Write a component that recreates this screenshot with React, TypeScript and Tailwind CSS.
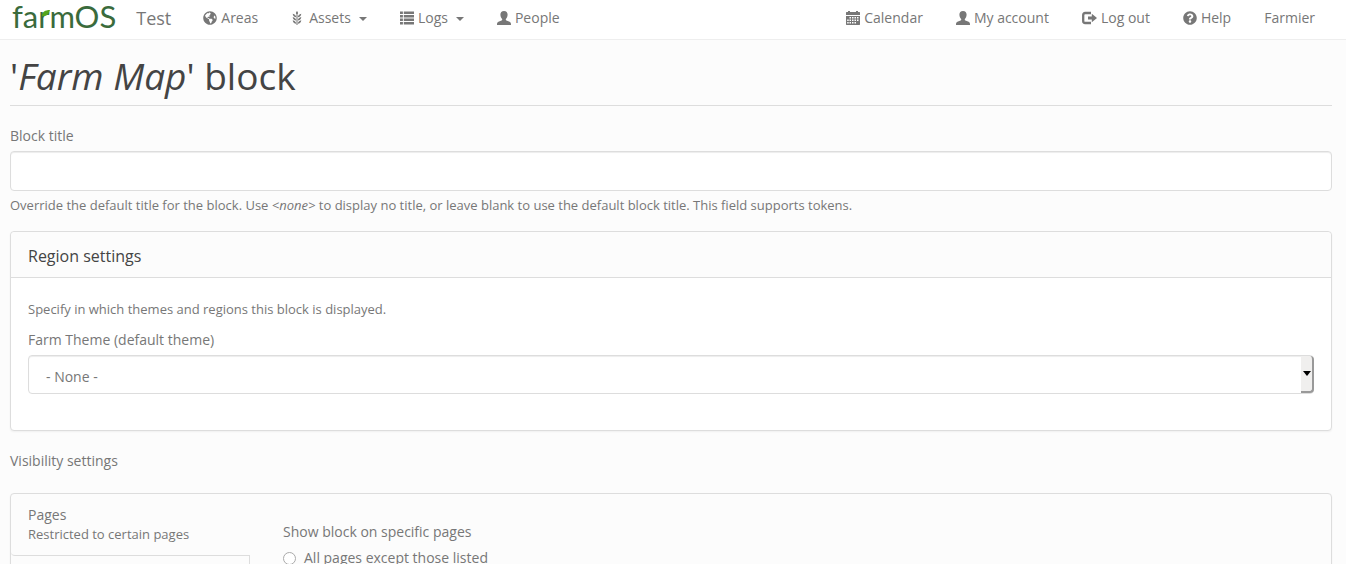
import type { ReactNode } from "react"
import { FaGlobeAmericas, FaQuestionCircle } from "react-icons/fa"

const UserIcon = () => (
    <svg viewBox="0 0 14 14" className="h-[14px] w-[14px] fill-current" aria-hidden="true">
        <path d="M7 0C4.600 0 3.400 1.500 3.400 3.600C3.400 5.300 4 7 5.100 8C5.400 8.700 5.200 9.300 4.600 9.600L1.400 10.800C0.400 11.300 0 12.200 0 13.400V14H14V13.400C14 12.200 13.600 11.300 12.600 10.800L9.400 9.600C8.800 9.300 8.600 8.700 8.900 8C10 7 10.600 5.300 10.600 3.600C10.600 1.500 9.400 0 7 0Z"/>
    </svg>
)

const ListIcon = () => (
    <svg viewBox="0 0 14 14" className="h-[14px] w-[14px] fill-current" aria-hidden="true">
        <path d="M0 .4h2.900v2.700H0zM3.800 .4H14v2.700H3.800zM0 3.900h2.900v2.700H0zM3.800 3.900H14v2.700H3.800zM0 7.400h2.900v2.700H0zM3.800 7.400H14v2.700H3.800zM0 10.900h2.900v2.700H0zM3.800 10.900H14v2.700H3.800z"/>
    </svg>
)

const GrainIcon = () => (
    <svg viewBox="0 0 14 14" className="h-[14px] w-[14px] fill-current" aria-hidden="true">
        <path d="M6 0C7.300 1.300 7.500 2.600 6 4.200C4.500 2.600 4.700 1.300 6 0ZM5.500 4H6.500V14H5.500Z"/>
        <path d="M1.700 2.800C3.700 3.200 5 4.300 5.300 6.300C3.200 6 1.900 5 1.700 2.800ZM10.300 2.800C8.300 3.200 7 4.300 6.700 6.300C8.800 6 10.100 5 10.300 2.800Z"/>
        <path d="M1.700 6C3.700 6.400 5 7.500 5.300 9.500C3.200 9.200 1.900 8.200 1.700 6ZM10.300 6C8.300 6.400 7 7.500 6.700 9.500C8.800 9.200 10.100 8.200 10.300 6Z"/>
        <path d="M1.700 9.200C3.700 9.600 5 10.700 5.300 12.700C3.200 12.400 1.900 11.400 1.700 9.200ZM10.300 9.200C8.300 9.600 7 10.700 6.700 12.700C8.800 12.400 10.100 11.400 10.300 9.200Z"/>
    </svg>
)

const CalendarIcon = () => (
    <svg viewBox="0 0 14 14" className="h-[14px] w-[14px] fill-current" aria-hidden="true">
        <path d="M2 0h2v1h6V0h2v1h1.500l.5.500V4H0V1.500L.5 1H2z"/>
        <path fillRule="evenodd" d="M0 5h14v8.500l-.5.500H.5l-.5-.5zM3.500 6v1.500h1.500V6zM6 6v1.500h1.500V6zM8.500 6v1.500H10V6zM11 6v1.500h1.500V6zM1.200 8.500V10h1.500V8.500zM3.500 8.500V10H5V8.500zM6 8.500V10h1.500V8.500zM8.500 8.500V10H10V8.500zM11 8.500V10h1.500V8.500zM1.200 11v1.500h1.500V11zM3.500 11v1.500H5V11zM6 11v1.500h1.500V11zM8.500 11v1.500H10V11z"/>
    </svg>
)

const LogOutIcon = () => (
    <svg viewBox="0 0 15 14" className="h-[14px] w-[15px]" aria-hidden="true">
        <path d="M9 2H3.200Q1.200 2 1.200 4V10Q1.200 12 3.200 12H9" fill="none" stroke="currentColor" strokeWidth="2.300"/>
        <path d="M6 5.400H9.800V2.800L15 7L9.800 11.200V8.600H6Z" fill="currentColor"/>
    </svg>
)

const Caret = () => (
    <span className="ml-1 mt-0.5 border-x-4 border-t-4 border-x-transparent border-t-[#777777]"/>
)

type NavLinkProps = {
    label: string
    icon?: ReactNode
    dropdown?: boolean
}

const NavLink = ({ label, icon, dropdown }: NavLinkProps) => (
    <li>
        <a href="#" className="flex items-center gap-1 whitespace-nowrap px-4 leading-5">
            {icon}
            <span>{label}</span>
            {dropdown && <Caret/>}
        </a>
    </li>
)

const Logo = () => (
    <a href="#" className="relative block pb-1 font-[Lato,sans-serif] text-[31px] leading-8 text-[#3a6b3c]">
        farmOS
        <svg viewBox="0 0 8 7" className="absolute left-[30px] top-[10px] h-[7px] w-2" aria-hidden="true">
            <path d="M0 6C0 2 3 0 8 0C7 4 4 7 0 6Z" fill="#55a51c"/>
        </svg>
    </a>
)

const Navbar = () => (
    <nav className="flex h-10 items-center justify-between border-b border-[#eeeeee] bg-white pb-1 pl-3 pr-[15px]">
        <div className="flex items-center">
            <Logo/>
            <a href="#" className="ml-5 mr-4 text-lg leading-5">Test</a>
            <ul className="flex gap-px">
                <NavLink label="Areas" icon={<FaGlobeAmericas className="h-[14px] w-[14px]"/>}/>
                <NavLink label="Assets" icon={<GrainIcon/>} dropdown/>
                <NavLink label="Logs" icon={<ListIcon/>} dropdown/>
                <NavLink label="People" icon={<UserIcon/>}/>
            </ul>
        </div>
        <ul className="flex gap-px">
            <NavLink label="Calendar" icon={<CalendarIcon/>}/>
            <NavLink label="My account" icon={<UserIcon/>}/>
            <NavLink label="Log out" icon={<LogOutIcon/>}/>
            <NavLink label="Help" icon={<FaQuestionCircle className="h-[14px] w-[14px]"/>}/>
            <NavLink label="Farmier"/>
        </ul>
    </nav>
)

const RegionSettings = () => (
    <section className="mt-4 rounded border border-[#dddddd] bg-white shadow-xs">
        <h2 className="rounded-t border-b border-[#dddddd] bg-[#fcfcfc] px-[17px] pb-[10px] pt-[14px] text-base leading-[21px] text-[#444444]">Region settings</h2>
        <div className="px-[17px] pb-9 pt-[21px]">
            <p className="text-[13px] leading-5">Specify in which themes and regions this block is displayed.</p>
            <label htmlFor="region" className="mt-[11px] block leading-5">Farm Theme (default theme)</label>
            <div className="relative mt-[5px]">
                <select id="region" className="block h-[39px] w-full appearance-none rounded border border-[#dddddd] bg-white pl-[17px] pr-8 pt-1 shadow-[inset_0_1px_1px_rgba(0,0,0,0.075)]">
                    <option>- None -</option>
                </select>
                <span className="pointer-events-none absolute inset-y-px right-0 flex w-[13px] items-center justify-center rounded-r border-b-2 border-r-2 border-[#999999] bg-[#f0efee]">
                    <span className="border-x-4 border-t-5 border-x-transparent border-t-black"/>
                </span>
            </div>
        </div>
    </section>
)

const VisibilitySettings = () => (
    <section>
        <h2 className="mt-5 leading-5">Visibility settings</h2>
        <div className="mt-[22px] flex rounded border border-[#dddddd] shadow-xs">
            <div className="flex w-[239px] shrink-0 flex-col">
                <a href="#" className="block rounded-bl border-b border-[#dddddd] px-[17px] pb-[11px] pt-[11px] leading-5">
                    Pages
                    <span className="block text-[13px] leading-[19px]">Restricted to certain pages</span>
                </a>
                <div className="grow border-r border-[#dddddd]"/>
            </div>
            <fieldset className="grow px-[33px] pb-10 pt-7">
                <legend className="float-left w-full leading-5">Show block on specific pages</legend>
                <label className="clear-both flex items-center gap-2 pt-[6px] leading-5">
                    <input type="radio" name="visibility" className="h-[13px] w-[13px] appearance-none rounded-full border border-[#aaaaaa] bg-white checked:border-4"/>
                    All pages except those listed
                </label>
            </fieldset>
        </div>
    </section>
)

const App = () => {
    return (
        <div className="h-screen overflow-hidden bg-[#fcfcfc] font-['Open_Sans',sans-serif] text-sm text-[#777777]">
            <Navbar/>
            <main className="pl-[10px] pr-[14px]">
                <h1 className="border-b border-[#dddddd] pb-[10px] pt-4 text-[37px] leading-[39px] text-[#444444]">'<em>Farm Map</em>' block</h1>
                <label htmlFor="block-title" className="mt-5 block leading-5">Block title</label>
                <input id="block-title" type="text" className="mt-[5px] block h-10 w-full rounded border border-[#dddddd] bg-white px-4 shadow-[inset_0_1px_1px_rgba(0,0,0,0.075)]"/>
                <p className="mt-1 text-[13px] leading-5">Override the default title for the block. Use <em>&lt;none&gt;</em> to display no title, or leave blank to use the default block title. This field supports tokens.</p>
                <RegionSettings/>
                <VisibilitySettings/>
            </main>
        </div>
    )
}

export default App
